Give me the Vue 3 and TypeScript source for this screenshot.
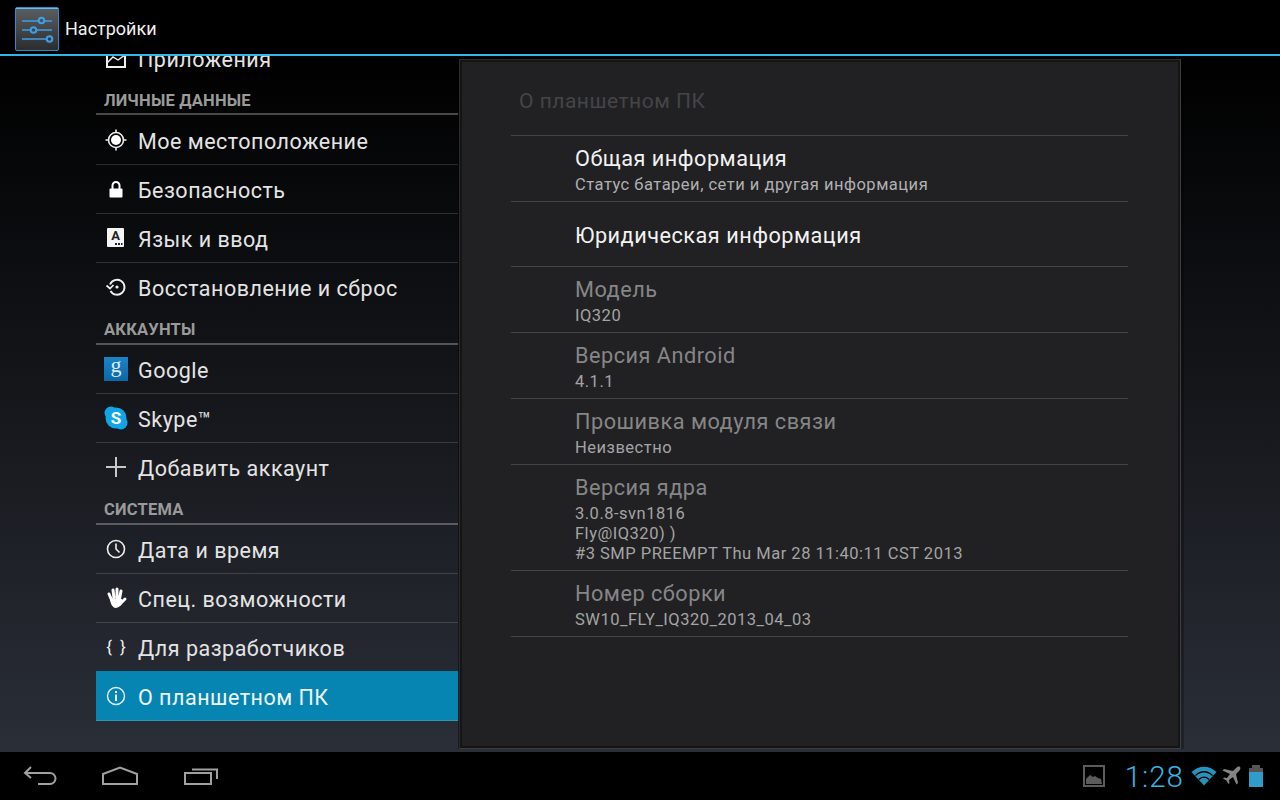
<template>
  <div class="screen">
    <header class="action-bar">
      <svg class="app-icon" width="44" height="44" viewBox="0 0 44 44">
        <defs>
          <linearGradient id="tile" x1="0" y1="0" x2="0" y2="1">
            <stop offset="0" stop-color="#5c5f62" />
            <stop offset="1" stop-color="#2b2c2e" />
          </linearGradient>
        </defs>
        <rect x="0.5" y="0.5" width="43" height="43" rx="1.5" fill="url(#tile)" stroke="#2f8ccc" />
        <path d="M1 1.5H43" stroke="#62bdf2" />
        <g fill="none" stroke="#3f9fe6" stroke-width="1.6">
          <path d="M7 14H23M30 14H37M7 23H15M22 23H37M7 32H31" />
          <circle cx="26.500" cy="13.500" r="2.800" stroke-width="2" />
          <circle cx="18.500" cy="23" r="2.800" stroke-width="2" />
          <circle cx="34.500" cy="32" r="2.800" stroke-width="2" />
        </g>
      </svg>
      <span class="app-title">Настройки</span>
    </header>

    <main class="content">
      <nav class="list">
        <template v-for="entry in entries" :key="entry.label">
          <div v-if="entry.section" class="section" :class="{ first: entry.first }">{{ entry.label }}</div>
          <div v-else class="row" :class="{ active: entry.active, last: entry.last }">
            <span class="row-icon">
              <svg v-if="entry.icon === 'apps'" width="24" height="24" viewBox="0 0 24 24" fill="none" stroke="#f0f0f0" stroke-width="2">
                <rect x="3" y="6" width="18" height="15" />
                <path d="M3 17l6-6 5 3 7-5" stroke-width="1.400" />
              </svg>
              <svg v-else-if="entry.icon === 'location'" width="24" height="24" viewBox="0 0 24 24">
                <circle cx="12" cy="12" r="7.500" fill="none" stroke="#eee" stroke-width="1.600" />
                <circle cx="12" cy="12" r="5" fill="#fff" />
                <path d="M12 1.500v3M12 19.500v3M1.500 12h3M19.500 12h3" stroke="#eee" stroke-width="1.600" />
              </svg>
              <svg v-else-if="entry.icon === 'lock'" width="24" height="24" viewBox="0 0 24 24">
                <path d="M8.500 12V8.500a3.500 3.500 0 0 1 7 0V12" fill="none" stroke="#fff" stroke-width="2" />
                <rect x="5.500" y="11.500" width="13" height="9" rx="1" fill="#fff" />
              </svg>
              <svg v-else-if="entry.icon === 'lang'" width="24" height="24" viewBox="0 0 24 24">
                <rect x="3" y="2" width="17" height="19" rx="1" fill="#f4f4f4" />
                <text x="11.500" y="14" text-anchor="middle" class="key-letter">A</text>
                <path d="M11 18h2M14 18h2M17 18h1.500" stroke="#222" stroke-width="1.800" />
              </svg>
              <svg v-else-if="entry.icon === 'reset'" width="24" height="24" viewBox="0 0 24 24" fill="none" stroke="#f0f0f0" stroke-width="1.900">
                <path d="M6 9.500A7.500 7.500 0 1 1 6.500 16" />
                <path d="M2.500 10.500l3.500 3 3.500-3.500" stroke-width="1.700" />
                <circle cx="13" cy="12" r="1.600" fill="#f0f0f0" stroke="none" />
              </svg>
              <svg v-else-if="entry.icon === 'google'" width="24" height="24" viewBox="0 0 24 24">
                <defs>
                  <linearGradient id="gtile" x1="0" y1="0" x2="0" y2="1">
                    <stop offset="0" stop-color="#1a84c8" />
                    <stop offset="1" stop-color="#0c68a6" />
                  </linearGradient>
                </defs>
                <rect width="24" height="24" fill="url(#gtile)" />
                <text x="12" y="15" text-anchor="middle" class="g-letter">g</text>
              </svg>
              <svg v-else-if="entry.icon === 'skype'" width="24" height="24" viewBox="0 0 24 24">
                <circle cx="7" cy="7" r="6.500" fill="#12a5e6" />
                <circle cx="17" cy="17" r="6.500" fill="#12a5e6" />
                <circle cx="12" cy="12" r="10.500" fill="#12a5e6" />
                <text x="12" y="18" text-anchor="middle" class="s-letter">S</text>
              </svg>
              <svg v-else-if="entry.icon === 'plus'" width="24" height="24" viewBox="0 0 24 24">
                <path d="M12 2v20M2 12h20" stroke="#c8c8c8" stroke-width="2" />
              </svg>
              <svg v-else-if="entry.icon === 'clock'" width="24" height="24" viewBox="0 0 24 24" fill="none" stroke="#eee" stroke-width="1.600">
                <circle cx="12" cy="12" r="8.500" />
                <path d="M12 6.500V12l3.500 3.500" />
              </svg>
              <svg v-else-if="entry.icon === 'hand'" width="24" height="24" viewBox="0 0 24 24">
                <path d="M5 8l3 7M9 4l1 8M13 3v9M17 5l-1.500 8M21 13l-5 5" fill="none" stroke="#fff" stroke-width="3" stroke-linecap="round" />
                <path d="M6 13h12v5q-3 4-7 4-4-1-5-9z" fill="#fff" />
              </svg>
              <span v-else-if="entry.icon === 'braces'" class="braces">{ }</span>
              <svg v-else-if="entry.icon === 'info'" width="24" height="24" viewBox="0 0 24 24" fill="none" stroke="#e6f2f6" stroke-width="1.500">
                <circle cx="12" cy="12" r="8.500" />
                <path d="M12 10.500V17" stroke-width="2" />
                <path d="M12 7v2" stroke-width="2" />
              </svg>
            </span>
            <span class="row-label">{{ entry.label }}</span>
          </div>
        </template>
      </nav>

      <section class="detail">
        <div class="detail-inner">
          <h2 class="detail-title">О планшетном ПК</h2>
          <div
            v-for="info in infos"
            :key="info.title"
            class="info"
            :class="{ enabled: info.enabled, single: !info.lines.length }"
            :style="{ height: info.height + 'px' }"
          >
            <div class="info-title">{{ info.title }}</div>
            <div v-for="line in info.lines" :key="line" class="info-line">{{ line }}</div>
          </div>
        </div>
      </section>
    </main>

    <footer class="system-bar">
      <div class="nav-buttons">
        <svg width="36" height="24" viewBox="0 0 36 24" fill="none" stroke="#a0a0a0" stroke-width="2">
          <path d="M8 3L2 9l6 5" />
          <path d="M2 9h25a5 5 0 0 1 0 11H15" />
        </svg>
        <svg width="38" height="20" viewBox="0 0 38 20" fill="none" stroke="#a0a0a0" stroke-width="2">
          <path d="M2 18V8L19 1.500 36 8v10z" />
        </svg>
        <svg class="recents" width="36" height="20" viewBox="0 0 36 20" fill="none" stroke="#a0a0a0" stroke-width="2">
          <rect x="2" y="7" width="26" height="11" />
          <path d="M9 3.500h25V13" />
        </svg>
      </div>
      <div class="status">
        <svg width="22" height="22" viewBox="0 0 22 22">
          <rect x="1" y="1" width="20" height="20" fill="none" stroke="#5c5c5c" stroke-width="2" />
          <path d="M3 19v-5l4-4 3 2 2-1 3 2 3 1 1 5z" fill="#5c5c5c" />
        </svg>
        <span class="clock">1:28</span>
        <svg width="26" height="20" viewBox="0 0 26 20" fill="none">
          <path d="M13 19.500L0.500 6C8-1 18-1 25.500 6z" fill="#2693bd" />
          <path d="M4.500 9.500C9.500 4.500 16.500 4.500 21.500 9.500M8 13.500C11 10.500 15 10.500 18 13.500" stroke="#000" stroke-width="1.300" />
        </svg>
        <svg class="plane" width="20" height="20" viewBox="0 0 20 20">
          <path d="M19 1c-1-1-3 0-4 1l-3 3-9-2-1.500 1.500L9 8l-3 4-3-.5-1 1 3.500 2 2 3.500 1-1-.5-3 4-3 3.500 7.500 1.500-1.500-2-9 3-3c1-1 2-3 1-4z" fill="#858585" />
        </svg>
        <div class="battery"><span class="battery-cap"></span><span class="battery-body"></span></div>
      </div>
    </footer>
  </div>
</template>

<script setup lang="ts">
interface Entry {
  label: string
  section?: boolean
  first?: boolean
  icon?: string
  active?: boolean
  last?: boolean
}

interface Info {
  title: string
  lines: string[]
  height: number
  enabled?: boolean
}

const entries: Entry[] = [
  { label: 'Приложения', icon: 'apps', last: true },
  { label: 'ЛИЧНЫЕ ДАННЫЕ', section: true, first: true },
  { label: 'Мое местоположение', icon: 'location' },
  { label: 'Безопасность', icon: 'lock' },
  { label: 'Язык и ввод', icon: 'lang' },
  { label: 'Восстановление и сброс', icon: 'reset', last: true },
  { label: 'АККАУНТЫ', section: true },
  { label: 'Google', icon: 'google' },
  { label: 'Skype™', icon: 'skype' },
  { label: 'Добавить аккаунт', icon: 'plus', last: true },
  { label: 'СИСТЕМА', section: true },
  { label: 'Дата и время', icon: 'clock' },
  { label: 'Спец. возможности', icon: 'hand' },
  { label: 'Для разработчиков', icon: 'braces' },
  { label: 'О планшетном ПК', icon: 'info', active: true }
]

const infos: Info[] = [
  { title: 'Общая информация', lines: ['Статус батареи, сети и другая информация'], height: 66, enabled: true },
  { title: 'Юридическая информация', lines: [], height: 65, enabled: true },
  { title: 'Модель', lines: ['IQ320'], height: 66 },
  { title: 'Версия Android', lines: ['4.1.1'], height: 66 },
  { title: 'Прошивка модуля связи', lines: ['Неизвестно'], height: 66 },
  {
    title: 'Версия ядра',
    lines: ['3.0.8-svn1816', 'Fly@IQ320) )', '#3 SMP PREEMPT Thu Mar 28 11:40:11 CST 2013'],
    height: 106
  },
  { title: 'Номер сборки', lines: ['SW10_FLY_IQ320_2013_04_03'], height: 66 }
]
</script>

<style>
html,
body {
  margin: 0;
  background: #000;
}
</style>

<style scoped>
.screen {
  width: 1280px;
  height: 800px;
  display: flex;
  flex-direction: column;
  overflow: hidden;
  font-family: Roboto, "Liberation Sans", sans-serif;
  background: #000;
}
.action-bar {
  height: 54px;
  flex: none;
  display: flex;
  align-items: center;
  padding-left: 15px;
  border-bottom: 2px solid #33b5e5;
  background: #000;
}
.app-icon {
  flex: none;
  margin-top: 3px;
}
.app-title {
  margin-left: 6px;
  padding-top: 2px;
  font-size: 18px;
  color: #f0f0f0;
}
.content {
  flex: 1;
  min-height: 0;
  display: flex;
  padding-left: 96px;
  overflow: hidden;
  background: linear-gradient(#000, #2a2e37);
}
.list {
  width: 362px;
  flex: none;
  margin-top: -22px;
}
.row {
  height: 48px;
  display: flex;
  align-items: center;
  border-bottom: 1px solid rgba(255, 255, 255, 0.15);
  color: #e4e4e4;
}
.row.last {
  border-bottom: none;
  height: 48px;
  padding-bottom: 1px;
}
.row.active {
  background: #0785b2;
  color: #eef6f9;
  box-shadow: 0 -1px 0 #0785b2;
}
.row-icon {
  width: 24px;
  height: 24px;
  margin-left: 8px;
  flex: none;
  display: flex;
  align-items: center;
  justify-content: center;
}
.row-label {
  margin-left: 10px;
  padding-top: 3px;
  font-size: 21.5px;
  letter-spacing: 0.5px;
  white-space: nowrap;
}
.section {
  height: 31px;
  padding-left: 8px;
  border-bottom: 2px solid rgba(255, 255, 255, 0.28);
  display: flex;
  align-items: flex-end;
  line-height: 26px;
  font-size: 16.5px;
  font-weight: 700;
  letter-spacing: 0.2px;
  color: #9a9a9a;
}
.section.first {
  height: 30px;
  margin-bottom: 1px;
  line-height: 24px;
}
.braces {
  font-size: 17px;
  word-spacing: 4px;
  color: #eee;
  white-space: nowrap;
}
.key-letter {
  font: 700 13px Roboto, sans-serif;
  fill: #222;
}
.g-letter {
  font: 400 22px "Liberation Serif", serif;
  fill: #dceaf4;
}
.s-letter {
  font: 700 17px Roboto, sans-serif;
  fill: #fff;
}
.detail {
  width: 722px;
  height: 690px;
  flex: none;
  margin: 3px 0 0 1px;
  padding: 2px;
  box-sizing: border-box;
  background: #151516;
  border: 1px solid #2b2b2b;
  border-right-color: #3d3d3d;
  border-bottom-color: #3d3d3d;
  box-shadow: 3px 0 0 rgba(0, 0, 0, 0.25), -1px 0 0 rgba(0, 0, 0, 0.4);
}
.detail-inner {
  height: 100%;
  box-sizing: border-box;
  padding: 0 50px 0 49px;
  background: #212123;
}
.detail-title {
  height: 74px;
  margin: 0;
  padding: 26px 0 0 8px;
  box-sizing: border-box;
  border-bottom: 1px solid #444;
  font-size: 21px;
  line-height: 26px;
  font-weight: 400;
  letter-spacing: 0.5px;
  color: #444547;
}
.info {
  box-sizing: border-box;
  padding: 8px 0 0 64px;
  border-bottom: 1px solid #444;
}
.info.single {
  padding-top: 19px;
}
.info-title {
  margin-bottom: 2px;
  font-size: 21.7px;
  line-height: 29px;
  letter-spacing: 0.5px;
  white-space: nowrap;
  color: #868687;
}
.info.enabled .info-title {
  color: #f2f2f2;
}
.info-line {
  font-size: 16.5px;
  line-height: 20px;
  letter-spacing: 0.5px;
  white-space: nowrap;
  color: #a4a4a4;
}
.info.enabled .info-line {
  color: #b0b0b0;
}
.system-bar {
  height: 48px;
  flex: none;
  display: flex;
  justify-content: space-between;
  align-items: center;
  background: #000;
}
.nav-buttons {
  display: flex;
  align-items: center;
  gap: 42px;
  padding-left: 23px;
}
.recents {
  margin-left: 2px;
}
.status {
  display: flex;
  align-items: center;
  padding-right: 17px;
}
.clock {
  margin: 0 7px 0 20px;
  padding-top: 2px;
  font-size: 29.5px;
  font-weight: 300;
  letter-spacing: 1px;
  color: #33b5e5;
}
.plane {
  margin-left: 4px;
}
.battery {
  margin-left: 8px;
  width: 14px;
  display: flex;
  flex-direction: column;
  align-items: center;
}
.battery-cap {
  width: 8px;
  height: 3px;
  background: #555;
}
.battery-body {
  width: 14px;
  height: 19px;
  background: linear-gradient(#555 0 4px, #2f9cc9 4px);
}
</style>
